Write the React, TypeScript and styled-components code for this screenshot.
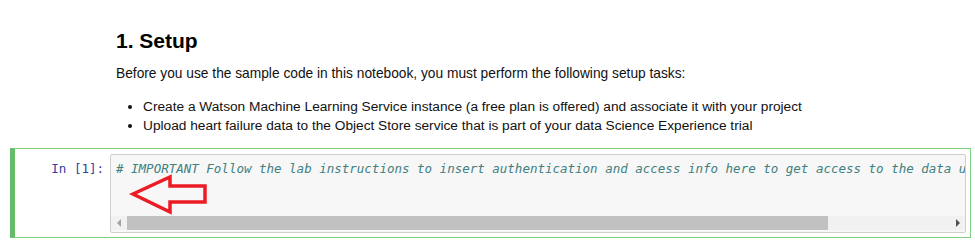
import styled, { createGlobalStyle } from "styled-components";

const GlobalStyle = createGlobalStyle`
  html, body {
    margin: 0;
    padding: 0;
    background: #ffffff;
  }
  body {
    font-family: "Liberation Sans", Arial, sans-serif;
    color: #000000;
  }
`;

const codeLine =
  "# IMPORTANT Follow the lab instructions to insert authentication and access info here to get access to the data used in this notebook.";

export default function App() {
  return (
    <>
      <GlobalStyle />
      <Notebook>
        {/* markdown cell */}
        <MarkdownCell>
          <Heading>1. Setup</Heading>
          <Paragraph>
            Before you use the sample code in this notebook, you must perform
            the following setup tasks:
          </Paragraph>
          <List>
            <li>
              Create a Watson Machine Learning Service instance (a free plan is
              offered) and associate it with your project
            </li>
            <li>
              Upload heart failure data to the Object Store service that is part
              of your data Science Experience trial
            </li>
          </List>
        </MarkdownCell>

        {/* code cell, selected in edit mode */}
        <CodeCell>
          <Prompt>In&nbsp;[1]:</Prompt>
          <InputArea>
            <CodeBody>
              <CodeText>{codeLine}</CodeText>
              <Annotation viewBox="0 0 92 42" width={92} height={42}>
                <polygon
                  points="5,20 42,3 42,12 77,12 77,28 42,28 42,38"
                  fill="none"
                  stroke="#ec1c24"
                  strokeWidth={3.5}
                  strokeLinejoin="miter"
                />
              </Annotation>
            </CodeBody>
            <ScrollBar>
              <ScrollButton>
                <Triangle $dir="left" $color="#a3a3a3" />
              </ScrollButton>
              <ScrollTrack>
                <ScrollThumb />
              </ScrollTrack>
              <ScrollButton>
                <Triangle $dir="right" $color="#505050" />
              </ScrollButton>
            </ScrollBar>
          </InputArea>
        </CodeCell>
      </Notebook>
    </>
  );
}

//✅ layout
const Notebook = styled.div`
  width: 961px;
  margin-left: 10px;
  padding-top: 29px;
`;

//markdown
const MarkdownCell = styled.div`
  padding-left: 106px;
  padding-bottom: 13px;
`;

const Heading = styled.h1`
  margin: 0 0 11px 0;
  font-size: 21px;
  line-height: 24px;
  font-weight: bold;
  color: #000000;
`;

const Paragraph = styled.p`
  margin: 0 0 14px 0;
  font-size: 13.75px;
  line-height: 19px;
  color: #111111;
`;

const List = styled.ul`
  margin: 0;
  padding-left: 27px;
  font-size: 13.7px;
  line-height: 19px;
  color: #111111;
`;

//code cell
const CodeCell = styled.div`
  display: flex;
  flex-direction: row;
  border: 1px solid #7fcf80;
  border-left: 5px solid #66bb6a;
  padding: 5px 4px 4px 0;
`;

const Prompt = styled.div`
  width: 95px;
  box-sizing: border-box;
  padding: 6px 6px 0 0;
  text-align: right;
  font-family: "DejaVu Sans Mono", monospace;
  font-size: 12.5px;
  line-height: 17px;
  color: #303f9f;
  flex-shrink: 0;
`;

const InputArea = styled.div`
  flex: 1;
  display: flex;
  flex-direction: column;
  border: 1px solid #cfcfcf;
  border-radius: 2px;
  background: #f7f7f7;
  min-width: 0;
`;

const CodeBody = styled.div`
  position: relative;
  height: 61px;
  padding: 5px 0 0 5px;
  box-sizing: border-box;
  overflow: hidden;
`;

const CodeText = styled.div`
  white-space: pre;
  font-family: "DejaVu Sans Mono", monospace;
  font-size: 12.5px;
  line-height: 17px;
  font-style: italic;
  color: #408080;
`;

// red arrow drawn over the screenshot
const Annotation = styled.svg`
  position: absolute;
  left: 17px;
  top: 19px;
  overflow: visible;
`;

//scrollbar
const ScrollBar = styled.div`
  display: flex;
  flex-direction: row;
  align-items: stretch;
  height: 14px;
  margin-bottom: 2px;
  background: #f1f1f1;
`;

const ScrollButton = styled.div`
  width: 15px;
  display: flex;
  justify-content: center;
  align-items: center;
  flex-shrink: 0;
`;

const ScrollTrack = styled.div`
  flex: 1;
  display: flex;
  align-items: stretch;
  padding: 0 1px;
`;

const ScrollThumb = styled.div`
  width: 701px;
  background: #c1c1c1;
`;

const Triangle = styled.div<{ $dir: "left" | "right"; $color: string }>`
  width: 0;
  height: 0;
  border-top: 4px solid transparent;
  border-bottom: 4px solid transparent;
  ${({ $dir, $color }) =>
    $dir === "left"
      ? `border-right: 4px solid ${$color};`
      : `border-left: 4px solid ${$color};`}
`;
